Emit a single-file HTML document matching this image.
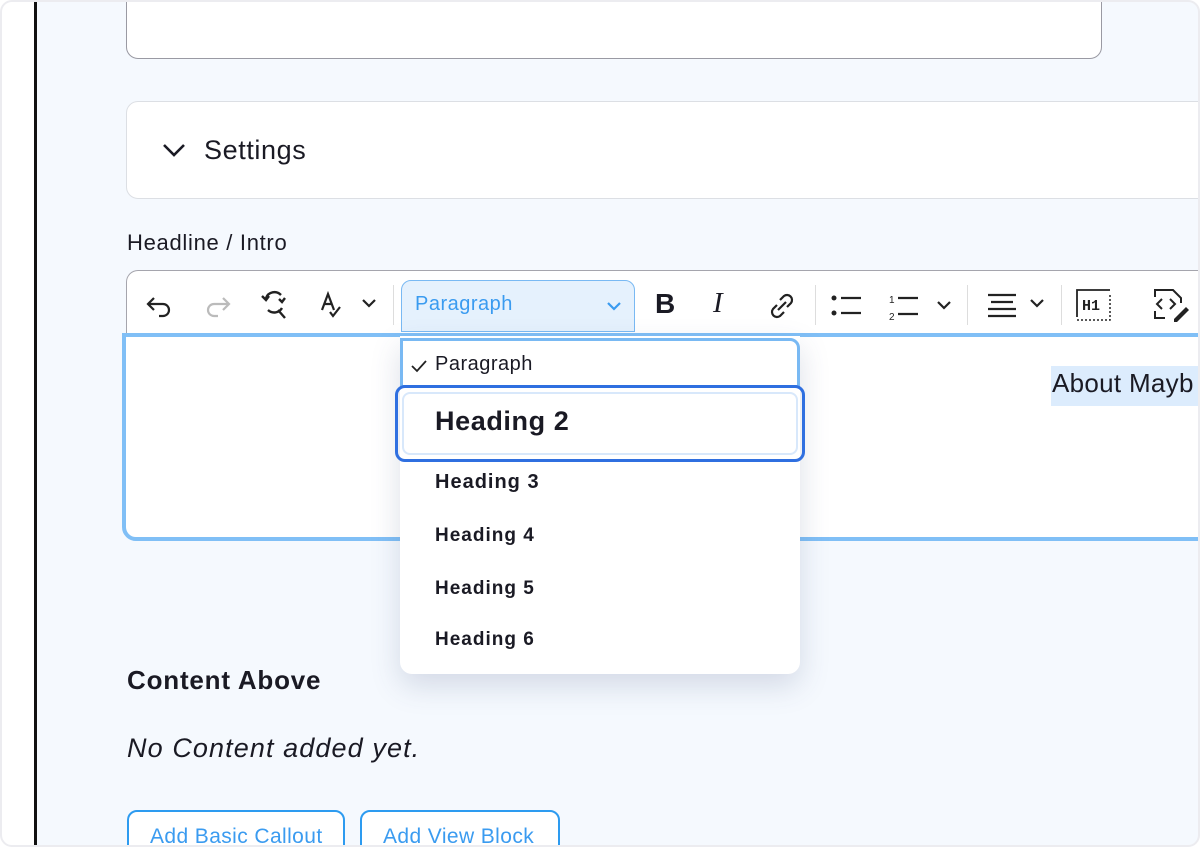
<!DOCTYPE html>
<html><head><meta charset="utf-8"><style>
*{box-sizing:border-box;margin:0;padding:0}
body{width:1200px;height:847px;overflow:hidden;background:#fff;font-family:"Liberation Sans",sans-serif;position:relative;color:#1a1a24}
.frame{position:absolute;left:0;top:0;width:1200px;height:847px;border-radius:12px;overflow:hidden;background:#fff}
.border{position:absolute;left:0;top:0;width:1200px;height:847px;border:2px solid #ececf0;border-radius:12px;pointer-events:none}
.main{position:absolute;left:37px;top:0;right:0;bottom:0;background:#f5f9fe}
.vline{position:absolute;left:34px;top:0;width:3px;height:847px;background:#111}
.box1{position:absolute;left:126px;top:-10px;width:976px;height:69px;background:#fff;border:1px solid #9a9aa3;border-radius:12px}
.settings{position:absolute;left:126px;top:101px;width:1090px;height:98px;background:#fff;border:1px solid #dcdfe4;border-radius:12px}
.settings span{position:absolute;left:77px;top:33px;font-size:27px;letter-spacing:0.6px;color:#1a1a24}
.lbl{position:absolute;left:127px;top:230px;font-size:22px;letter-spacing:0.7px}
.toolbar{position:absolute;left:126px;top:270px;width:1090px;height:66px;background:#fff;border:1px solid #a5a5ad;border-bottom:none;border-radius:12px 0 0 0}
.editor{position:absolute;left:122px;top:333px;width:1090px;height:208px;background:#fff;border:4px solid #80bff6;border-radius:0 0 0 14px}
.sel{position:absolute;left:1051px;top:366px;background:#dcecfd;font-size:26px;letter-spacing:0.3px;padding:2px 0 4px 1px;height:40px;width:160px;white-space:nowrap;overflow:hidden}
.para{position:absolute;left:401px;top:280px;width:234px;height:52px;background:#e5f1fd;border:1px solid #79b9f3;border-radius:10px 10px 0 0}
.para span{position:absolute;left:13px;top:12px;font-size:20px;letter-spacing:0.5px;color:#3a9bf0}
.dd{position:absolute;left:400px;top:336px;width:400px;height:338px;background:#fff;border-radius:0 0 12px 12px;box-shadow:0 12px 30px rgba(60,80,120,.18)}
.dd .first{position:absolute;left:0;top:2px;width:400px;height:50px;border:3px solid #79b9f3;border-radius:0 10px 0 0}
.h2{position:absolute;left:395px;top:385px;width:410px;height:77px;border:3px solid #2f6fe0;border-radius:10px}
.h2 div{position:absolute;left:4px;top:4px;right:4px;bottom:4px;border:2px solid #d8e8fb;border-radius:8px}
.t{position:absolute;font-weight:bold;font-size:20px;letter-spacing:1px}
.ca{position:absolute;left:127px;top:665px;font-size:26px;letter-spacing:0.8px;font-weight:bold}
.nc{position:absolute;left:127px;top:733px;font-size:27px;letter-spacing:1.1px;font-style:italic}
.btn{position:absolute;top:810px;height:50px;border:2px solid #2d9bf0;border-radius:10px;background:#fff;color:#3a9bf0;font-size:21px;letter-spacing:0.4px;padding:13px 0 0 21px;white-space:nowrap}
.sep{position:absolute;top:285px;width:1px;height:40px;background:#ddd}
svg{position:absolute}
</style></head><body>
<div class="frame">
<div class="main"></div>
<div class="vline"></div>
<div class="box1"></div>
<div class="settings"><svg style="left:34px;top:38px" width="26" height="20" viewBox="0 0 26 20"><path d="M3 5l10 10 10-10" stroke="#1a1a24" stroke-width="2.6" fill="none"/></svg><span>Settings</span></div>
<div class="lbl">Headline / Intro</div>
<div class="toolbar"></div>
<div class="editor"></div>
<div class="sel">About Mayb</div>
<svg style="left:145px;top:292px" width="30" height="26" viewBox="0 0 30 26"><path d="M9 6L3 12l6 6M3 12h15a6 6 0 010 12h-4" stroke="#222" stroke-width="2.2" fill="none"/></svg>
<svg style="left:202px;top:292px" width="30" height="26" viewBox="0 0 30 26"><path d="M21 6l6 6-6 6M27 12H12a6 6 0 000 12h4" stroke="#bbb" stroke-width="2.2" fill="none"/></svg>
<svg style="left:258px;top:288px" width="36" height="34" viewBox="0 0 36 34"><path d="M8 10a9 9 0 0115-3M24 20a9 9 0 01-14 2M20 22l7 8M4 8l4 4 3-4M27 10l-3 4-3-3" stroke="#222" stroke-width="2.4" fill="none"/></svg>
<svg style="left:318px;top:290px" width="62" height="30" viewBox="0 0 62 30"><path d="M4 20l6-16 6 16M6 14h8M12 22l3 4 7-9" stroke="#222" stroke-width="2.2" fill="none"/><path d="M45 10l6 6 6-6" stroke="#222" stroke-width="2.2" fill="none"/></svg>
<div class="sep" style="left:393px"></div>
<div class="para"><span>Paragraph</span><svg style="left:203px;top:18px" width="18" height="14" viewBox="0 0 18 14"><path d="M3 4l6 6 6-6" stroke="#3a9bf0" stroke-width="2.2" fill="none"/></svg></div>
<div style="position:absolute;left:655px;top:288px;font-size:28px;font-weight:bold">B</div>
<div style="position:absolute;left:713px;top:287px;font-size:29px;font-style:italic;font-family:'Liberation Serif',serif">I</div>
<svg style="left:766px;top:290px" width="32" height="32" viewBox="0 0 32 32"><path d="M14 10l4-4a5 5 0 017 7l-4 4M18 22l-4 4a5 5 0 01-7-7l4-4M12 20l8-8" stroke="#222" stroke-width="2.2" fill="none"/></svg>
<div class="sep" style="left:815px"></div>
<svg style="left:828px;top:292px" width="36" height="28" viewBox="0 0 36 28"><circle cx="6" cy="6" r="2.5" fill="#222"/><circle cx="6" cy="21" r="2.5" fill="#222"/><path d="M13 6h20M13 21h20" stroke="#222" stroke-width="2.2"/></svg>
<svg style="left:886px;top:292px" width="72" height="30" viewBox="0 0 72 30"><text x="3" y="11" font-size="10" font-family="Liberation Sans" fill="#222">1</text><text x="3" y="28" font-size="10" font-family="Liberation Sans" fill="#222">2</text><path d="M12 6h20M12 22h20" stroke="#222" stroke-width="2.2"/><path d="M52 10l6 6 6-6" stroke="#222" stroke-width="2.2" fill="none"/></svg>
<div class="sep" style="left:967px"></div>
<svg style="left:985px;top:290px" width="66" height="30" viewBox="0 0 66 30"><path d="M3 5h28M6 12h22M3 19h28M3 26h28" stroke="#222" stroke-width="2.2"/><path d="M46 10l6 6 6-6" stroke="#222" stroke-width="2.2" fill="none"/></svg>
<div class="sep" style="left:1061px"></div>
<svg style="left:1074px;top:287px" width="40" height="36" viewBox="0 0 40 36"><path d="M3 30V3h33" stroke="#222" stroke-width="1.8" fill="none"/><path d="M3 33h33V6" stroke="#222" stroke-width="1.5" stroke-dasharray="2 2" fill="none"/><text x="8" y="23" font-size="15" font-weight="bold" font-family="Liberation Mono" fill="#222">H1</text></svg>
<svg style="left:1150px;top:287px" width="50" height="36" viewBox="0 0 50 36"><path d="M5 10V3h18l8 8v5M5 24v7h10" stroke="#222" stroke-width="2" fill="none"/><path d="M12 12l-5 5 5 5M20 12l5 5-5 5" stroke="#222" stroke-width="2" fill="none"/><path d="M24 32l12-12 3 3-12 12h-3z" fill="#222"/></svg>
<div class="dd"><div class="first"></div>
<svg style="left:10px;top:22px" width="18" height="16" viewBox="0 0 18 16"><path d="M2 8l5 5 9-10" stroke="#222" stroke-width="1.8" fill="none"/></svg>
<div style="position:absolute;left:35px;top:17px;font-size:20px;letter-spacing:0.5px">Paragraph</div>
<div class="t" style="left:35px;top:135px">Heading 3</div>
<div class="t" style="left:35px;top:189px;font-size:19px">Heading 4</div>
<div class="t" style="left:35px;top:242px;font-size:19px">Heading 5</div>
<div class="t" style="left:35px;top:293px;font-size:19px">Heading 6</div>
</div>
<div class="h2"><div></div></div>
<div class="t" style="left:435px;top:406px;font-size:27px;letter-spacing:0.6px">Heading 2</div>
<div class="ca">Content Above</div>
<div class="nc">No Content added yet.</div>
<div class="btn" style="left:127px;width:218px">Add Basic Callout</div>
<div class="btn" style="left:360px;width:200px">Add View Block</div>
</div>
<div class="border"></div>
</body></html>
